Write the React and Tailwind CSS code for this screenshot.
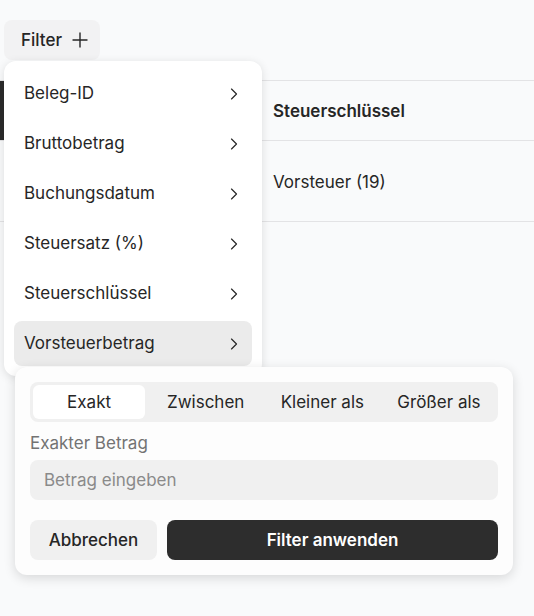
import React from "react";
import { ChevronRight, Plus } from "lucide-react";

const fields = [
  "Beleg-ID",
  "Bruttobetrag",
  "Buchungsdatum",
  "Steuersatz (%)",
  "Steuerschlüssel",
  "Vorsteuerbetrag",
];

const modes = ["Exakt", "Zwischen", "Kleiner als", "Größer als"];

export default function App() {
  return (
    <div
      className="relative min-h-[616px] w-full overflow-hidden bg-[#f9fafb] text-[17px] text-[#262626]"
      style={{ fontFamily: "Inter, 'Noto Sans', sans-serif" }}
    >
      {/* toolbar */}
      <div className="pt-5 pl-1">
        <button className="flex h-10 items-center gap-[6px] rounded-lg bg-[#f2f2f3] pl-[17px] pr-2 font-medium">
          <span className="pt-px">Filter</span>
          <Plus size={24} strokeWidth={1.4} />
        </button>
      </div>

      {/* table */}
      <div className="mt-5">
        <div className="flex h-[61px] border-y border-[#e3e3e5]">
          <div className="w-[273px] shrink-0">
            <div className="h-full w-1 bg-[#2b2b2b]" />
          </div>
          <div className="flex flex-1 items-center pt-[2px] font-semibold">Steuerschlüssel</div>
        </div>
        <div className="flex h-[81px] border-b border-[#e3e3e5]">
          <div className="w-[273px] shrink-0" />
          <div className="flex flex-1 items-center pt-[3px]">Vorsteuer (19)</div>
        </div>
      </div>

      {/* field menu */}
      <div className="absolute left-1 top-[61px] flex w-[258px] flex-col gap-[5px] rounded-xl bg-white p-[10px] shadow-[0_2px_10px_rgba(0,0,0,0.12)]">
        {fields.map((f, i) => (
          <div
            key={f}
            className={
              i === fields.length - 1
                ? "flex h-[45px] items-center justify-between rounded-lg bg-[#ebebeb] pl-[10px] pr-2"
                : "flex h-[45px] items-center justify-between rounded-lg pl-[10px] pr-2"
            }
          >
            <span className="pt-px">{f}</span>
            <ChevronRight size={20} strokeWidth={1.4} />
          </div>
        ))}
      </div>

      {/* amount filter popover */}
      <div className="absolute left-[15px] top-[367px] w-[498px] rounded-xl bg-[#fdfdfd] p-[15px] shadow-[0_3px_12px_rgba(0,0,0,0.14)]">
        <div className="flex h-10 gap-[4.5px] rounded-lg bg-[#f0f0f0] p-[3px]">
          {modes.map((m, i) => (
            <div
              key={m}
              className={
                i === 0
                  ? "flex flex-1 items-center justify-center rounded-md bg-white pt-px"
                  : "flex flex-1 items-center justify-center rounded-md pt-px"
              }
            >
              {m}
            </div>
          ))}
        </div>
        <div className="mt-[9px] leading-6 text-[#737373]">Exakter Betrag</div>
        <div className="mt-[5px] flex h-10 items-center rounded-lg bg-[#f0f0f0] px-[14px] pt-px text-[#8a8a8a]">
          Betrag eingeben
        </div>
        <div className="mt-5 flex gap-[10px]">
          <button className="h-10 w-[127px] rounded-lg bg-[#f0f0f0] pt-px font-medium">Abbrechen</button>
          <button className="h-10 flex-1 rounded-lg bg-[#2d2d2d] pt-px font-semibold text-white">
            Filter anwenden
          </button>
        </div>
      </div>
    </div>
  );
}
